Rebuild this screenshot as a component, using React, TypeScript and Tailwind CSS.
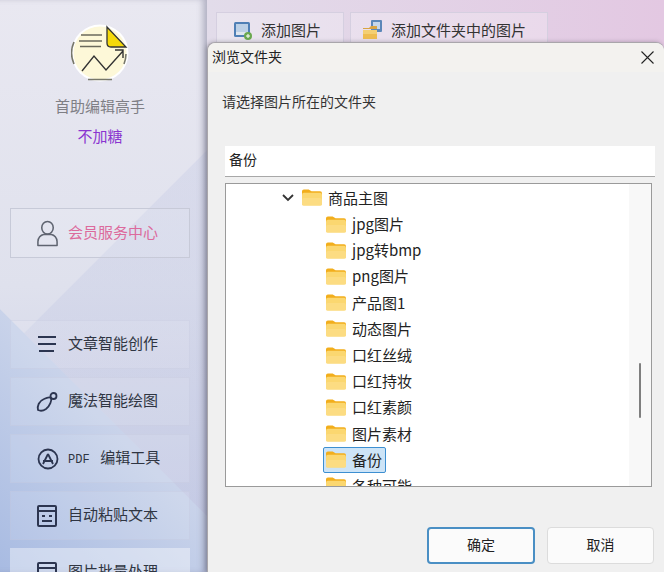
const cjk = "[font-family:'Noto_Sans_CJK_SC','Noto_Sans',sans-serif]";

function PersonIcon() {
  return (
    <svg width="23" height="27" viewBox="0 0 24 28" fill="none" stroke="#5f6470" strokeWidth="1.6">
      <ellipse cx="12" cy="8" rx="6" ry="6.5" />
      <path d="M2 26.5v-4c0-4 3-7 6-7.500h8c3 .5 6 3.500 6 7.500v4z" strokeLinejoin="round" />
    </svg>
  );
}

function MenuIcon({ name }: { name: string }) {
  const color = "#2c3550";
  if (name === "lines") {
    return (
      <svg width="20" height="20" viewBox="0 0 20 20" fill="none" stroke={color} strokeWidth="2">
        <path d="M1 2h18M1 9h18M2 16h15" />
      </svg>
    );
  }
  if (name === "brush") {
    return (
      <svg width="24" height="22" viewBox="0 0 24 22" fill="none" stroke={color} strokeWidth="1.8" className="-ml-[1px]">
        <path d="M2 19c-1-4 1-9 6-11 3-1.500 6-2 7-1 1 2-1 8-5 11-3 2-6 2-8 1z" />
        <circle cx="17.500" cy="5" r="3" />
      </svg>
    );
  }
  if (name === "pdf") {
    return (
      <svg width="22" height="22" viewBox="0 0 22 22" fill="none" stroke={color} strokeWidth="1.8">
        <circle cx="11" cy="11" r="9.500" />
        <path d="M11 6l-5 10M11 6l5 10M6 13h10" />
      </svg>
    );
  }
  return (
    <svg width="20" height="22" viewBox="0 0 20 22" fill="none" stroke={color} strokeWidth="2">
      <rect x="1" y="1" width="18" height="20" rx="1" />
      <path d="M1 6h18M5 11h3M12 11h3M5 16h10" />
    </svg>
  );
}

function SideItem({ icon, label, mono }: { icon: string; label: string; mono?: boolean }) {
  return (
    <div className="h-[49px] w-[180px] shrink-0 flex items-center pl-[26px] border border-[#c0c5dc]/30 bg-white/10">
      <div className="w-[31px] flex justify-start"><MenuIcon name={icon} /></div>
      <span className="pb-[2px] text-[15px] text-[#2f3542] whitespace-pre">
        {mono ? <span className="[font-family:'Liberation_Mono',monospace] text-[12px]">PDF </span> : null}
        {label}
      </span>
    </div>
  );
}

function Logo() {
  return (
    <svg width="58" height="58" viewBox="0 0 58 58">
      <circle cx="29" cy="29" r="28.500" fill="#fff" />
      <circle cx="29" cy="29" r="26.500" fill="#fdf8d8" />
      <path d="M3 18a27 27 0 0 0 0 22M55 30a27 27 0 0 1-2 10M17 55.500h24" fill="none" stroke="#77776a" strokeWidth="1.600" />
      <path d="M36 3l19 20H40q-4 0-4-4z" fill="#f5d90a" stroke="#333" strokeWidth="1.300" />
      <path d="M10 11h21M8 17h23M9 22.500h21" stroke="#6b6a5c" strokeWidth="1.500" />
      <path d="M11 47l12-15 12 14 17-19M44 26l8 0 0 8" fill="none" stroke="#333" strokeWidth="1.400" />
    </svg>
  );
}

function ImgIcon() {
  return (
    <svg width="20" height="20" viewBox="0 0 20 20">
      <rect x="1" y="2" width="16" height="15" rx="1.500" fill="#4f7fb5" />
      <rect x="3" y="4" width="12" height="8" fill="#bcd0e6" />
      <rect x="3" y="12" width="12" height="3" fill="#dfe7ef" />
      <circle cx="15" cy="16" r="4" fill="#6aa84f" />
      <path d="M13 16h4M15 14v4" stroke="#fff" strokeWidth="1" />
    </svg>
  );
}

function FolderImgIcon() {
  return (
    <svg width="22" height="22" viewBox="0 0 22 22">
      <rect x="9" y="1" width="11" height="12" rx="1" fill="#5b87b8" />
      <rect x="11" y="3" width="7" height="7" fill="#c4d6ea" />
      <path d="M1 9h6l2-2h6v3H1z" fill="#d9a441" />
      <path d="M1 11h14v9H1z" fill="#f4cf73" />
      <path d="M1 15h14v5H1z" fill="#eebc52" />
    </svg>
  );
}

function FolderIcon() {
  return (
    <svg width="20" height="17" viewBox="0 0 21 17" className="shrink-0">
      <path d="M0 2a2 2 0 0 1 2-2h5l3 2h9a2 2 0 0 1 2 2v3H0z" fill="#f2ae1c" />
      <rect x="0" y="3.500" width="21" height="13.500" rx="2" fill="#fbd770" />
      <rect x="0" y="9" width="21" height="8" rx="2" fill="#fcdc82" />
    </svg>
  );
}

function TreeRow({ label, selected }: { label: string; selected?: boolean }) {
  return (
    <div className="h-[26.200px] shrink-0 flex items-center pl-[97px]">
      <div className={"h-[26px] flex items-center gap-[6px] pl-[2px] pr-[3px] rounded-[2px] border " + (selected ? "border-[#3d8fd1] bg-[#cde4f7]" : "border-transparent")}>
        <FolderIcon />
        <span className="pb-[1px] text-[15px] leading-none text-[#222]">{label}</span>
      </div>
    </div>
  );
}

export default function App() {
  const rows = ["jpg图片", "jpg转bmp", "png图片", "产品图1", "动态图片", "口红丝绒", "口红持妆", "口红素颜", "图片素材"];

  return (
    <div className={"relative w-[664px] h-[572px] overflow-hidden flex " + cjk}>
      {/* 左側欄 */}
      <aside className="w-[207px] h-full shrink-0 flex flex-col items-center pr-[7px] bg-[linear-gradient(45deg,#a8bbe2_0%,#c9d3ea_33.700%,transparent_33.800%),linear-gradient(135deg,transparent_45.800%,rgba(185,192,225,0.25)_45.900%),linear-gradient(180deg,#e9e8f1_0%,#dfe1ed_50%,#c3c9e4_100%)] shadow-[inset_-6px_0_6px_-2px_rgba(110,110,140,0.45)]">
        <div className="mt-[24px]"><Logo /></div>
        <div className="mt-[13px] text-[15px] leading-[22px] text-[#7f7f85]">首助编辑高手</div>
        <div className="mt-[8px] text-[15px] leading-[22px] text-[#8a35d0]">不加糖</div>
        <div className="mt-[61px] h-[50px] w-[180px] shrink-0 flex items-center pl-[25px] gap-[9px] border border-[#c7cad8] bg-white/10">
          <PersonIcon />
          <span className="pb-[2px] text-[15px] text-[#dc6a9c]">会员服务中心</span>
        </div>
        <div className="mt-[62px] flex flex-col gap-[8px]">
          <SideItem icon="lines" label="文章智能创作" />
          <SideItem icon="brush" label="魔法智能绘图" />
          <SideItem icon="pdf" label=" 编辑工具" mono />
          <SideItem icon="doc" label="自动粘贴文本" />
          <div className="h-[49px] w-[180px] shrink-0 flex items-center pl-[27px] bg-white/40">
            <div className="w-[31px]"><MenuIcon name="doc" /></div>
            <span className="pb-[2px] text-[15px] text-[#2f3542]">图片批量处理</span>
          </div>
        </div>
      </aside>

      {/* 主區 */}
      <main className="flex-1 h-full bg-[linear-gradient(90deg,#e2dcea,#e3c8e2)] pt-[12px] pl-[9px] flex items-start gap-[6px]">
        <div className="w-[128px] h-[36px] flex items-center pl-[16px] gap-[8px] border border-[#d5cfe0] bg-white/25 text-[15px] text-[#333]">
          <ImgIcon />添加图片
        </div>
        <div className="w-[198px] h-[36px] flex items-center pl-[11px] gap-[7px] border border-[#d5cfe0] bg-white/25 text-[15px] text-[#333]">
          <FolderImgIcon />添加文件夹中的图片
        </div>
      </main>

      {/* 瀏覽資料夾對話框 */}
      <div className="absolute left-[207px] top-[42px] w-[457px] h-[530px] flex flex-col rounded-t-[8px] bg-[#f0f0f0] border-t border-l border-[#a9a6ab] shadow-[-1px_0_4px_rgba(60,60,70,0.35)]">
        <div className="h-[29px] shrink-0 flex items-center justify-between pl-[4px] pr-[10px] bg-[#f3f2ef] rounded-t-[8px]">
          <span className="pb-[2px] text-[14px] text-[#222]">浏览文件夹</span>
          <svg width="13" height="13" viewBox="0 0 13 13" stroke="#222" strokeWidth="1.100">
            <path d="M.5.500l12 12M12.500.500l-12 12" />
          </svg>
        </div>
        <div className="mt-[19px] pl-[14px] text-[14px] leading-[20px] text-[#333]">请选择图片所在的文件夹</div>
        <div className="mt-[35px] ml-[17px] w-[430px] h-[31px] shrink-0 flex items-center pl-[4px] pb-[3px] bg-white border-b border-[#a8a8a8] text-[14px] text-[#222]">备份</div>
        <div className="mt-[6px] ml-[17px] w-[427px] h-[304px] shrink-0 flex border border-[#9a9a9a] bg-white overflow-hidden">
          <div className="flex-1 overflow-hidden flex flex-col">
            <div className="h-[27px] shrink-0 flex items-center pl-[56px]">
              <svg width="12" height="8" viewBox="0 0 12 8" fill="none" stroke="#333" strokeWidth="1.800">
                <path d="M1 1l5 5 5-5" />
              </svg>
              <div className="ml-[8px]"><FolderIcon /></div>
              <span className="ml-[6px] pb-[1px] text-[15px] leading-none text-[#222]">商品主图</span>
            </div>
            {rows.map((r) => (
              <TreeRow key={r} label={r} />
            ))}
            <TreeRow label="备份" selected />
            <TreeRow label="各种可能" />
          </div>
          <div className="w-[22px] shrink-0 bg-[#f8f8f8] relative">
            <div className="absolute left-[10px] top-[179px] w-[2px] h-[55px] rounded-full bg-[#7f7f7f]" />
          </div>
        </div>
        <div className="mt-[40px] flex justify-end gap-[12px] pr-[10px]">
          <div className="w-[108px] h-[37px] flex items-center justify-center pb-[2px] rounded-[4px] border-2 border-[#4a8fc4] bg-[#fbfbfb] text-[14px] text-[#222]">确定</div>
          <div className="w-[107px] h-[37px] flex items-center justify-center pb-[2px] rounded-[4px] border border-[#dcdcdc] bg-[#fbfbfb] text-[14px] text-[#222]">取消</div>
        </div>
      </div>
    </div>
  );
}
